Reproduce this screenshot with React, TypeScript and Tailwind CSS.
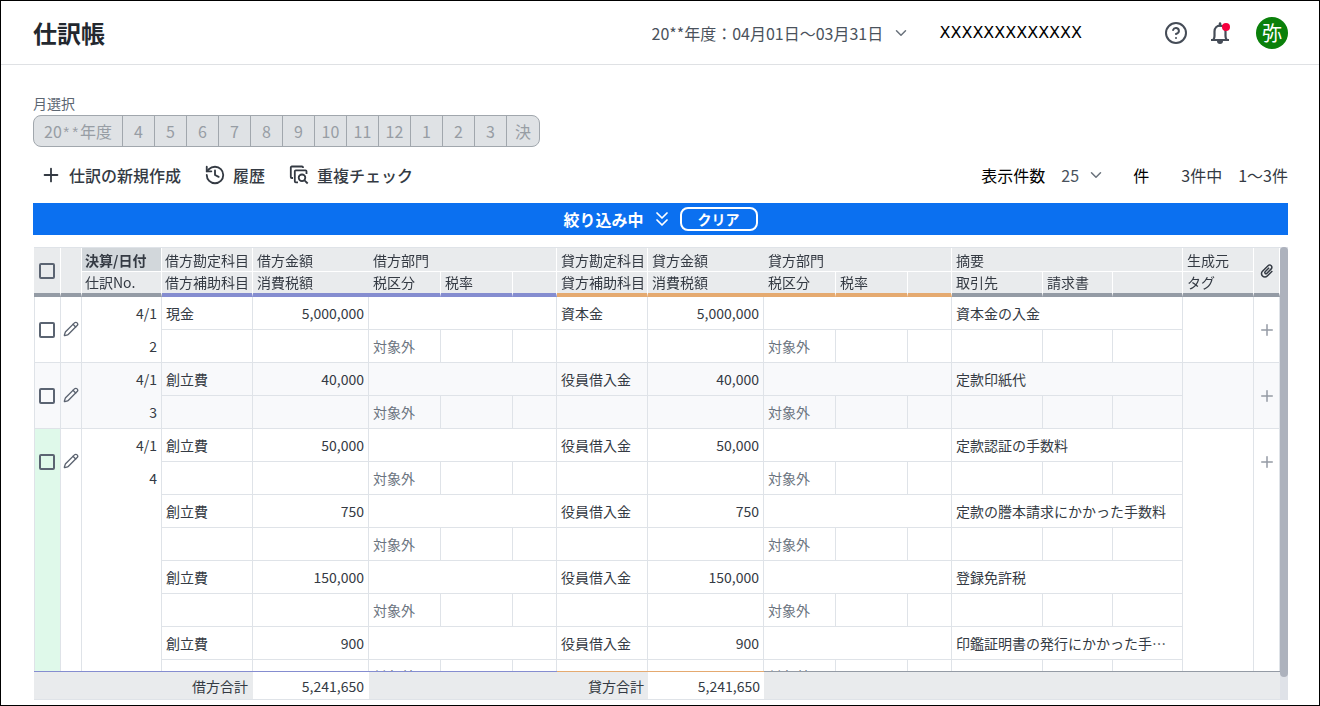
import React, { useState } from 'react';
import { ChevronDown, ChevronsDown, CircleHelp, History, Pencil, Plus } from 'lucide-react';
import { MdAttachment } from 'react-icons/md';

interface Line {
  debit: string;
  credit: string;
  amount: string;
  note: string;
}

interface Entry {
  date: string;
  no: number;
  lines: Line[];
}

const ENTRIES: Entry[] = [
  {
    date: '4/1',
    no: 2,
    lines: [{ debit: '現金', credit: '資本金', amount: '5,000,000', note: '資本金の入金' }],
  },
  {
    date: '4/1',
    no: 3,
    lines: [{ debit: '創立費', credit: '役員借入金', amount: '40,000', note: '定款印紙代' }],
  },
  {
    date: '4/1',
    no: 4,
    lines: [
      { debit: '創立費', credit: '役員借入金', amount: '50,000', note: '定款認証の手数料' },
      { debit: '創立費', credit: '役員借入金', amount: '750', note: '定款の謄本請求にかかった手数料' },
      { debit: '創立費', credit: '役員借入金', amount: '150,000', note: '登録免許税' },
      { debit: '創立費', credit: '役員借入金', amount: '900', note: '印鑑証明書の発行にかかった手数料' },
    ],
  },
];

const MONTHS = ['4', '5', '6', '7', '8', '9', '10', '11', '12', '1', '2', '3', '決'];

export default function App() {
  return (
    <div className="flex h-screen min-h-96 flex-col border border-black bg-white font-['Noto_Sans_CJK_JP',sans-serif] text-[#343a43]">
      <PageHeader />
      <main className="flex min-h-0 flex-1 flex-col pt-7 pr-[31px] pb-[5px] pl-8">
        <MonthPicker />
        <Toolbar />
        <FilterBar />
        <JournalTable />
      </main>
    </div>
  );
}

function PageHeader() {
  return (
    <header className="flex h-16 shrink-0 items-center border-b border-[#dfe1e4] pr-[31px] pl-8">
      <h1 className="text-2xl font-bold text-[#23282f]">仕訳帳</h1>
      <div className="ml-auto flex items-center">
        <div className="relative flex items-center">
          <select
            aria-label="年度"
            className="appearance-none bg-transparent pr-[26px] text-base text-[#4a525c]"
          >
            <option>20**年度：04月01日～03月31日</option>
          </select>
          <ChevronDown className="pointer-events-none absolute right-0 h-[18px] w-[18px] text-[#6a727c]" />
        </div>
        <span className="ml-[30px] font-['DejaVu_Sans',sans-serif] text-base text-black">
          XXXXXXXXXXXXX
        </span>
        <button aria-label="ヘルプ" className="ml-[82px]">
          <CircleHelp className="h-6 w-6 text-[#454c57]" />
        </button>
        <button aria-label="お知らせ" className="ml-5">
          <BellIcon />
        </button>
        <button className="ml-6 flex h-8 w-8 items-center justify-center rounded-full bg-[#0a800a] text-xl text-white">
          弥
        </button>
      </div>
    </header>
  );
}

function MonthPicker() {
  return (
    <div className="flex shrink-0 flex-col gap-0.5">
      <p className="text-sm text-[#5c6672]">月選択</p>
      <div className="flex h-8 w-fit overflow-hidden rounded-lg border border-[#a1a7ad] bg-[#dfe2e5] text-base text-[#979da4]">
        <button className="w-[88px]">
          20<span className="font-['Liberation_Mono',monospace] text-[15px] leading-none">**</span>年度
        </button>
        {MONTHS.map((m) => (
          <button key={m} className="w-8 border-l border-[#a1a7ad] last:w-[33px]">
            {m}
          </button>
        ))}
      </div>
    </div>
  );
}

function Toolbar() {
  return (
    <div className="mt-3 flex h-8 shrink-0 items-center text-base">
      <div className="flex items-center gap-[23px] pl-[7px] font-medium">
        <button className="flex items-center gap-[7px]">
          <Plus className="h-[22px] w-[22px]" />
          仕訳の新規作成
        </button>
        <button className="flex items-center gap-[7px]">
          <History className="h-[22px] w-[22px]" />
          履歴
        </button>
        <button className="flex items-center gap-[7px]">
          <DuplicateIcon />
          重複チェック
        </button>
      </div>
      <div className="ml-auto flex items-center">
        <label htmlFor="page-size" className="text-black">
          表示件数
        </label>
        <div className="relative ml-4 flex items-center">
          <select
            id="page-size"
            className="w-11 appearance-none bg-transparent text-[#4a525c]"
          >
            <option>25</option>
          </select>
          <ChevronDown className="pointer-events-none absolute right-0 h-[18px] w-[18px] text-[#6a727c]" />
        </div>
        <span className="ml-7 text-black">件</span>
        <span className="ml-8">3件中</span>
        <span className="ml-4">1～3件</span>
      </div>
    </div>
  );
}

function FilterBar() {
  return (
    <div className="mt-3 flex h-8 shrink-0 items-center justify-center bg-[#0b70f0] text-white">
      <span className="text-base font-bold">絞り込み中</span>
      <ChevronsDown className="mx-1.5 h-6 w-6" strokeWidth={1.75} />
      <button className="h-6 w-[78px] rounded-lg border-2 border-white text-sm leading-5 font-bold">
        クリア
      </button>
    </div>
  );
}

const TH = 'border-white border-r px-1 text-left font-normal whitespace-nowrap';
const TOP = 'border-b border-b-white';
const SUB = 'border-b-4 pb-px leading-5';
const TD = 'border-[#dfe3e8] border-r border-b px-1 py-0 whitespace-nowrap overflow-hidden';

function JournalTable() {
  return (
    <div className="mt-3 flex min-h-0 flex-1 pl-px">
      <div className="min-w-0 flex-1 overflow-y-auto border-y border-[#dfe3e8] [scrollbar-width:none]">
        <table className="w-full table-fixed border-separate border-spacing-0 text-sm">
          <colgroup>
            <col className="w-[27px]" />
            <col className="w-[21px]" />
            <col className="w-20" />
            <col className="w-[91px]" />
            <col className="w-[116px]" />
            <col className="w-[72px]" />
            <col className="w-[72px]" />
            <col className="w-11" />
            <col className="w-[91px]" />
            <col className="w-[116px]" />
            <col className="w-[72px]" />
            <col className="w-[72px]" />
            <col className="w-11" />
            <col className="w-[91px]" />
            <col className="w-[70px]" />
            <col />
            <col className="w-[71px]" />
            <col className="w-[26px]" />
          </colgroup>
          <thead className="sticky top-0 z-10 bg-[#e9ebed]">
            <tr className="h-6">
              <th rowSpan={2} className="border-r border-b-4 border-r-white border-b-[#949ba5] p-0">
                <RowCheck label="すべて選択" />
              </th>
              <th rowSpan={2} className="border-r border-b-4 border-r-white border-b-[#949ba5] p-0" />
              <th className="border-r border-b border-white bg-[#d2d7db] px-[3px] text-left font-bold whitespace-nowrap">
                決算/日付
              </th>
              <th className="border-r border-b border-white px-[3px] text-left font-normal whitespace-nowrap">
                借方勘定科目
              </th>
              <th className="border-b border-b-white px-1 text-left font-normal">借方金額</th>
              <th colSpan={3} className={`${TH} ${TOP}`}>借方部門</th>
              <th className={`${TH} ${TOP}`}>貸方勘定科目</th>
              <th className="border-b border-b-white px-1 text-left font-normal">貸方金額</th>
              <th colSpan={3} className={`${TH} ${TOP}`}>貸方部門</th>
              <th colSpan={3} className={`${TH} ${TOP}`}>摘要</th>
              <th className={`${TH} ${TOP}`}>生成元</th>
              <th rowSpan={2} className="border-r border-b-4 border-r-white border-b-[#949ba5] p-0">
                <MdAttachment aria-label="添付" className="mx-auto h-[18px] w-[18px] -rotate-45" />
              </th>
            </tr>
            <tr className="h-[25px]">
              <th className={`border-r border-r-white border-b-[#949ba5] px-[3px] text-left font-normal ${SUB}`}>
                仕訳No.
              </th>
              <th
                className={`border-r border-r-white border-b-[#858dd0] px-[3px] text-left font-normal whitespace-nowrap ${SUB}`}
              >
                借方補助科目
              </th>
              <th className={`border-b-[#858dd0] px-1 text-left font-normal ${SUB}`}>消費税額</th>
              <th className={`${TH} ${SUB} border-b-[#858dd0]`}>税区分</th>
              <th className={`${TH} ${SUB} border-b-[#858dd0]`}>税率</th>
              <th className={`${TH} ${SUB} border-b-[#858dd0]`} />
              <th className={`${TH} ${SUB} border-b-[#e5aa70]`}>貸方補助科目</th>
              <th className={`border-b-[#e5aa70] px-1 text-left font-normal ${SUB}`}>消費税額</th>
              <th className={`${TH} ${SUB} border-b-[#e5aa70]`}>税区分</th>
              <th className={`${TH} ${SUB} border-b-[#e5aa70]`}>税率</th>
              <th className={`${TH} ${SUB} border-b-[#e5aa70]`} />
              <th className={`${TH} ${SUB} border-b-[#949ba5]`}>取引先</th>
              <th className={`${TH} ${SUB} border-b-[#949ba5]`}>請求書</th>
              <th className={`${TH} ${SUB} border-b-[#949ba5]`} />
              <th className={`${TH} ${SUB} border-b-[#949ba5]`}>タグ</th>
            </tr>
          </thead>
          <tbody>
            {ENTRIES.map((entry, i) => (
              <EntryRows key={entry.no} entry={entry} striped={i % 2 === 1} />
            ))}
          </tbody>
          <tfoot className="sticky bottom-0 z-10 bg-[#e9ebed]">
            <tr className="h-7">
              <td colSpan={4} className="border-t border-t-[#858dd0] px-[5px] text-right">借方合計</td>
              <td className="border-t border-t-[#858dd0] bg-white px-[5px] text-right">5,241,650</td>
              <td colSpan={3} className="border-t border-t-[#858dd0]" />
              <td className="border-t border-t-[#e5aa70] px-1 text-right">貸方合計</td>
              <td className="border-t border-t-[#e5aa70] bg-white px-1 text-right">5,241,650</td>
              <td colSpan={8} className="border-t border-t-[#949ba5]" />
            </tr>
          </tfoot>
        </table>
      </div>
      <div className="w-2 shrink-0 bg-[#dfe2e8]">
        <div className="h-[95%] rounded-t-md rounded-b-md bg-[#adb2bd]" />
      </div>
    </div>
  );
}

function EntryRows({ entry, striped }: { entry: Entry; striped: boolean }) {
  const span = entry.lines.length * 2;
  // compound entries are marked green
  const markClass = entry.lines.length > 1 ? 'bg-[#dff9ea]' : '';

  return (
    <>
      {entry.lines.map((line, i) => (
        <React.Fragment key={i}>
          <tr className={`h-[33px] ${striped ? 'bg-[#f8f9fb]' : ''}`}>
            {i === 0 && (
              <>
                <td
                  rowSpan={span}
                  className={`border-r border-b border-l border-[#dfe3e8] p-0 pr-px align-top ${markClass}`}
                >
                  <div className="flex h-[65px] items-center">
                    <RowCheck label={`仕訳No.${entry.no}を選択`} />
                  </div>
                </td>
                <td rowSpan={span} className="border-r border-b border-[#dfe3e8] p-0 align-top">
                  <button aria-label="編集" className="flex h-[63px] w-full items-center justify-center">
                    <Pencil className="h-4 w-4 text-[#5b6370]" />
                  </button>
                </td>
                <td
                  rowSpan={span}
                  className="border-r border-b border-[#dfe3e8] px-1 py-0 text-right align-top leading-8"
                >
                  <div className="pb-px">{entry.date}</div>
                  <div>{entry.no}</div>
                </td>
              </>
            )}
            <td className={TD}>{line.debit}</td>
            <td className={`${TD} text-right`}>{line.amount}</td>
            <td colSpan={3} className={TD} />
            <td className={TD}>{line.credit}</td>
            <td className={`${TD} text-right`}>{line.amount}</td>
            <td colSpan={3} className={TD} />
            <td colSpan={3} className={`${TD} text-ellipsis`}>{line.note}</td>
            {i === 0 && (
              <>
                <td rowSpan={span} className={TD} />
                <td rowSpan={span} className="border-r border-b border-[#dfe3e8] p-0 align-top">
                  <button aria-label="添付を追加" className="flex h-[65px] w-full items-center justify-center">
                    <Plus className="h-[18px] w-[18px] text-[#949aa4]" />
                  </button>
                </td>
              </>
            )}
          </tr>
          <tr className={`h-[33px] ${striped ? 'bg-[#f8f9fb]' : ''}`}>
            <td className={TD} />
            <td className={TD} />
            <td className={`${TD} text-[#6b7480]`}>対象外</td>
            <td className={TD} />
            <td className={TD} />
            <td className={TD} />
            <td className={TD} />
            <td className={`${TD} text-[#6b7480]`}>対象外</td>
            <td className={TD} />
            <td className={TD} />
            <td className={TD} />
            <td className={TD} />
            <td className={TD} />
          </tr>
        </React.Fragment>
      ))}
    </>
  );
}

function RowCheck({ label }: { label: string }) {
  const [checked, setChecked] = useState(false);

  return (
    <input
      type="checkbox"
      aria-label={label}
      checked={checked}
      onChange={(e) => setChecked(e.target.checked)}
      className="mx-auto block h-4 w-4 appearance-none rounded-xs border-2 border-[#5b6472] checked:bg-[#0b70f0]"
    />
  );
}

function BellIcon() {
  return (
    <svg viewBox="0 0 24 24" className="h-6 w-6" fill="none">
      <path
        d="M3 19h18M5.500 19v-.6c.8-.9 1-2 1-3.400V10.500C6.500 7 9 4.700 12 4.700s5.500 2.300 5.500 5.800V15c0 1.400.2 2.500 1 3.400v.6"
        stroke="#454c57"
        strokeWidth="2.200"
        strokeLinejoin="round"
      />
      <path d="M12 2.500v2" stroke="#454c57" strokeWidth="2.500" strokeLinecap="round" />
      <path d="M9 20h6a3 3 0 0 1-6 0z" fill="#454c57" />
      <circle cx="18" cy="6" r="4" fill="#f5003d" />
    </svg>
  );
}

/* Two stacked sheets with a magnifier */
function DuplicateIcon() {
  return (
    <svg
      viewBox="-1 -1 22 22"
      className="h-[22px] w-[22px]"
      fill="none"
      stroke="currentColor"
      strokeWidth="1.800"
      strokeLinejoin="round"
    >
      <path d="M4 13H2.800A1 1 0 0 1 1.800 12V2.500a1 1 0 0 1 1-1H13a1 1 0 0 1 1 1V3" />
      <path d="M9 17.300H6.800a1 1 0 0 1-1-1V6.300a1 1 0 0 1 1-1H16.500a1 1 0 0 1 1 1V9" />
      <circle cx="13" cy="12.800" r="3.300" />
      <path d="M15.500 15.300l3.200 3.200" />
    </svg>
  );
}
